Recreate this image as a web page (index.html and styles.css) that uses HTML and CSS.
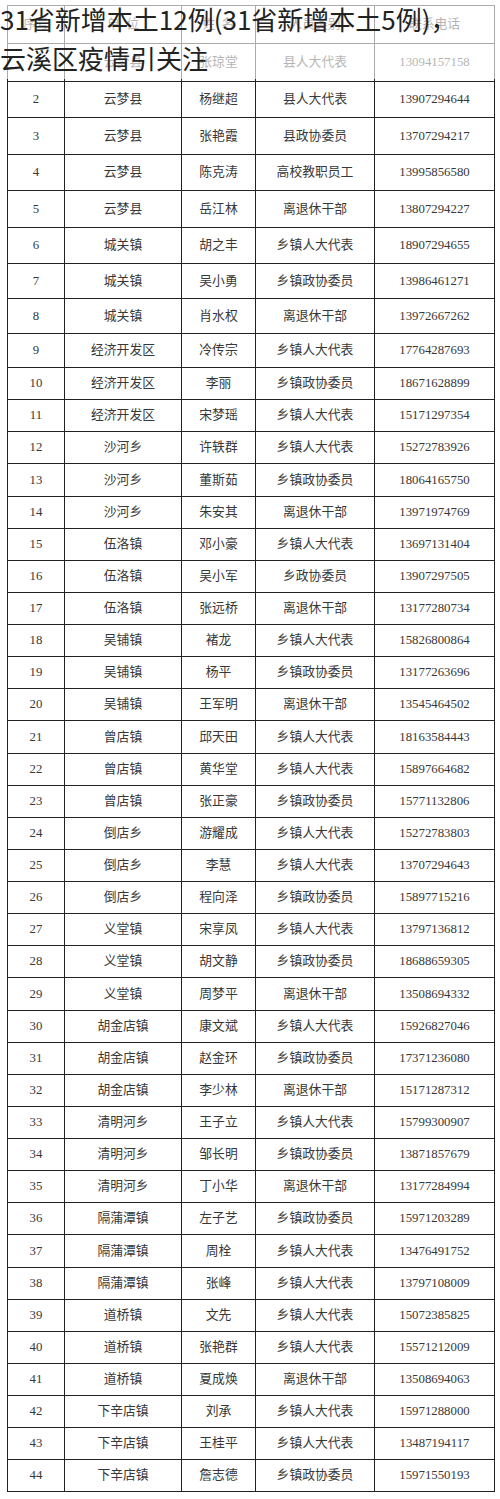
FILE: index.html
```html
<!DOCTYPE html>
<html lang="zh-CN">
<head>
<meta charset="utf-8">
<title>31省新增本土12例</title>
<link rel="stylesheet" href="styles.css">
</head>
<body>
<div class="page">
  <table class="roster">
    <colgroup>
      <col class="c-no"><col class="c-unit"><col class="c-name"><col class="c-type"><col class="c-tel">
    </colgroup>
    <tbody>
      <tr class="h-head"><td>序号</td><td>单&nbsp;&nbsp;位</td><td>姓&nbsp;&nbsp;名</td><td>人员类别</td><td>联系电话</td></tr>
      <tr class="h1"><td>1</td><td>云梦县</td><td>张琼堂</td><td>县人大代表</td><td>13094157158</td></tr>
      <tr class="h2"><td>2</td><td>云梦县</td><td>杨继超</td><td>县人大代表</td><td>13907294644</td></tr>
      <tr class="h3"><td>3</td><td>云梦县</td><td>张艳霞</td><td>县政协委员</td><td>13707294217</td></tr>
      <tr class="h4"><td>4</td><td>云梦县</td><td>陈克涛</td><td>高校教职员工</td><td>13995856580</td></tr>
      <tr class="h5"><td>5</td><td>云梦县</td><td>岳江林</td><td>离退休干部</td><td>13807294227</td></tr>
      <tr class="h6"><td>6</td><td>城关镇</td><td>胡之丰</td><td>乡镇人大代表</td><td>18907294655</td></tr>
      <tr class="h7"><td>7</td><td>城关镇</td><td>吴小勇</td><td>乡镇政协委员</td><td>13986461271</td></tr>
      <tr class="h8"><td>8</td><td>城关镇</td><td>肖水权</td><td>离退休干部</td><td>13972667262</td></tr>
      <tr class="h9"><td>9</td><td>经济开发区</td><td>冷传宗</td><td>乡镇人大代表</td><td>17764287693</td></tr>
      <tr><td>10</td><td>经济开发区</td><td>李丽</td><td>乡镇政协委员</td><td>18671628899</td></tr>
      <tr><td>11</td><td>经济开发区</td><td>宋梦瑶</td><td>乡镇人大代表</td><td>15171297354</td></tr>
      <tr><td>12</td><td>沙河乡</td><td>许轶群</td><td>乡镇人大代表</td><td>15272783926</td></tr>
      <tr><td>13</td><td>沙河乡</td><td>董斯茹</td><td>乡镇政协委员</td><td>18064165750</td></tr>
      <tr><td>14</td><td>沙河乡</td><td>朱安其</td><td>离退休干部</td><td>13971974769</td></tr>
      <tr><td>15</td><td>伍洛镇</td><td>邓小豪</td><td>乡镇人大代表</td><td>13697131404</td></tr>
      <tr><td>16</td><td>伍洛镇</td><td>吴小军</td><td>乡政协委员</td><td>13907297505</td></tr>
      <tr><td>17</td><td>伍洛镇</td><td>张远桥</td><td>离退休干部</td><td>13177280734</td></tr>
      <tr><td>18</td><td>吴铺镇</td><td>褚龙</td><td>乡镇人大代表</td><td>15826800864</td></tr>
      <tr><td>19</td><td>吴铺镇</td><td>杨平</td><td>乡镇政协委员</td><td>13177263696</td></tr>
      <tr><td>20</td><td>吴铺镇</td><td>王军明</td><td>离退休干部</td><td>13545464502</td></tr>
      <tr><td>21</td><td>曾店镇</td><td>邱天田</td><td>乡镇人大代表</td><td>18163584443</td></tr>
      <tr><td>22</td><td>曾店镇</td><td>黄华堂</td><td>乡镇人大代表</td><td>15897664682</td></tr>
      <tr><td>23</td><td>曾店镇</td><td>张正豪</td><td>乡镇政协委员</td><td>15771132806</td></tr>
      <tr><td>24</td><td>倒店乡</td><td>游耀成</td><td>乡镇人大代表</td><td>15272783803</td></tr>
      <tr><td>25</td><td>倒店乡</td><td>李慧</td><td>乡镇人大代表</td><td>13707294643</td></tr>
      <tr><td>26</td><td>倒店乡</td><td>程向泽</td><td>乡镇政协委员</td><td>15897715216</td></tr>
      <tr><td>27</td><td>义堂镇</td><td>宋享凤</td><td>乡镇人大代表</td><td>13797136812</td></tr>
      <tr><td>28</td><td>义堂镇</td><td>胡文静</td><td>乡镇政协委员</td><td>18688659305</td></tr>
      <tr><td>29</td><td>义堂镇</td><td>周梦平</td><td>离退休干部</td><td>13508694332</td></tr>
      <tr><td>30</td><td>胡金店镇</td><td>康文斌</td><td>乡镇人大代表</td><td>15926827046</td></tr>
      <tr><td>31</td><td>胡金店镇</td><td>赵金环</td><td>乡镇政协委员</td><td>17371236080</td></tr>
      <tr><td>32</td><td>胡金店镇</td><td>李少林</td><td>离退休干部</td><td>15171287312</td></tr>
      <tr><td>33</td><td>清明河乡</td><td>王子立</td><td>乡镇人大代表</td><td>15799300907</td></tr>
      <tr><td>34</td><td>清明河乡</td><td>邹长明</td><td>乡镇政协委员</td><td>13871857679</td></tr>
      <tr><td>35</td><td>清明河乡</td><td>丁小华</td><td>离退休干部</td><td>13177284994</td></tr>
      <tr><td>36</td><td>隔蒲潭镇</td><td>左子艺</td><td>乡镇政协委员</td><td>15971203289</td></tr>
      <tr><td>37</td><td>隔蒲潭镇</td><td>周栓</td><td>乡镇人大代表</td><td>13476491752</td></tr>
      <tr><td>38</td><td>隔蒲潭镇</td><td>张峰</td><td>乡镇人大代表</td><td>13797108009</td></tr>
      <tr><td>39</td><td>道桥镇</td><td>文先</td><td>乡镇人大代表</td><td>15072385825</td></tr>
      <tr><td>40</td><td>道桥镇</td><td>张艳群</td><td>乡镇人大代表</td><td>15571212009</td></tr>
      <tr><td>41</td><td>道桥镇</td><td>夏成焕</td><td>离退休干部</td><td>13508694063</td></tr>
      <tr><td>42</td><td>下辛店镇</td><td>刘承</td><td>乡镇人大代表</td><td>15971288000</td></tr>
      <tr><td>43</td><td>下辛店镇</td><td>王桂平</td><td>乡镇人大代表</td><td>13487194117</td></tr>
      <tr><td>44</td><td>下辛店镇</td><td>詹志德</td><td>乡镇政协委员</td><td>15971550193</td></tr>
    </tbody>
  </table>
  <div class="veil"></div>
  <h1 class="headline">31省新增本土12例(31省新增本土5例)，<br>云溪区疫情引关注</h1>
</div>
</body>
</html>
```

FILE: styles.css
```css
* { box-sizing: border-box; }
html, body { margin: 0; padding: 0; background: #ffffff; }
.page {
  position: relative;
  width: 500px;
  height: 1499px;
  padding: 5px 0 0 7px;
  overflow: hidden;
}
.roster {
  border-collapse: collapse;
  table-layout: fixed;
  width: 487px;
  font-family: "Liberation Serif", "Noto Sans CJK SC", serif;
  font-size: 12.8px;
  color: #383838;
}
.c-no { width: 57px; }
.c-unit { width: 117px; }
.c-name { width: 74px; }
.c-type { width: 119px; }
.c-tel { width: 120px; }
.roster td {
  border: 1px solid #222222;
  text-align: center;
  vertical-align: middle;
  padding: 0;
  height: 32.14px;
  line-height: 1;
  white-space: nowrap;
}
.roster .h-head td { height: 38px; }
.roster .h1 td { height: 38px; }
.roster .h2 td { height: 36px; }
.roster .h3 td { height: 37px; }
.roster .h4 td { height: 36px; }
.roster .h5 td { height: 37px; }
.roster .h6 td { height: 36px; }
.roster .h7 td { height: 35px; }
.roster .h8 td { height: 35px; }
.roster .h9 td { height: 34px; }
.veil {
  position: absolute;
  left: 0;
  top: 0;
  width: 500px;
  height: 79px;
  background: rgba(255, 255, 255, 0.62);
}
.headline {
  position: absolute;
  left: 0;
  top: -1px;
  margin: 0;
  font-family: "Noto Sans CJK SC", "Noto Sans", sans-serif;
  font-weight: 400;
  font-size: 26px;
  line-height: 39px;
  color: #222222;
  white-space: nowrap;
}
```
